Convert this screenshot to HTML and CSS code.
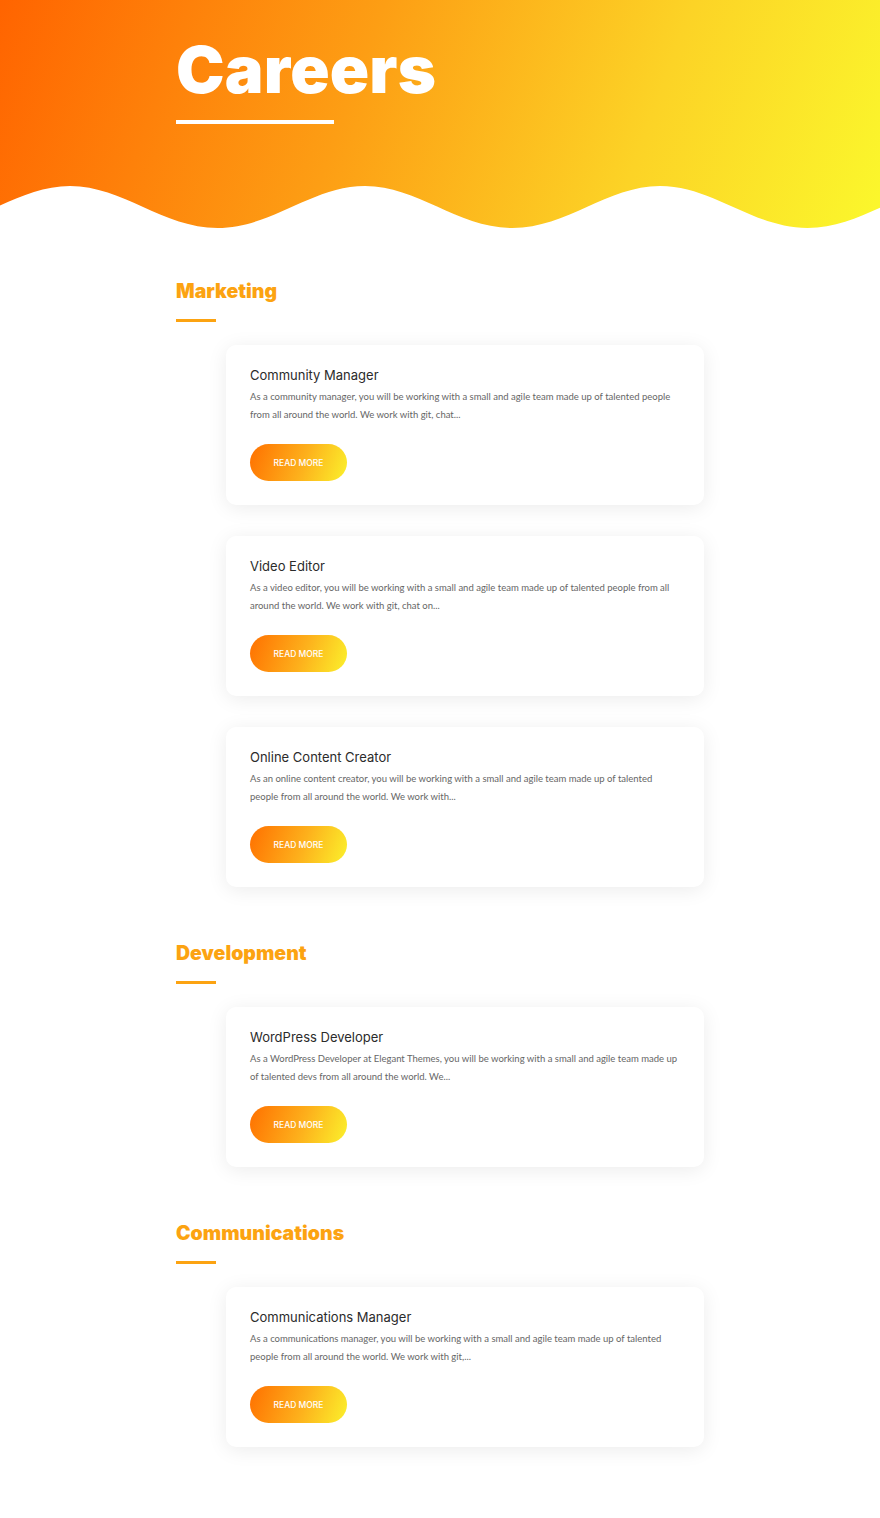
FILE: index.html
```html
<!DOCTYPE html>
<html lang="en">
<head>
  <meta charset="UTF-8" />
  <meta name="viewport" content="width=device-width, initial-scale=1" />
  <title>Careers</title>
  <link rel="stylesheet" href="styles.css">
</head>
<body>

<!-- Hero -->
<header class="hero">
  <div class="hero-inner">
    <h1>Careers</h1>
    <div class="hero-line"></div>
  </div>
  <svg class="hero-wave" viewBox="0 0 880 50" preserveAspectRatio="none" aria-hidden="true">
    <path fill="#fff" d="M-225 6 C-171 6 -131 48 -77.5 48 S17 6 70 6 S163 48 217.5 48 S312 6 365 6 S458 48 512.5 48 S607 6 660 6 S753 48 807.5 48 S902 6 955 6 V52 H-225 Z" />
  </svg>
</header>

<main class="jobs">

  <section class="dept">
    <h2>Marketing</h2>
    <div class="dept-line"></div>
    <div class="job-list">
      <div class="job">
        <h3>Community Manager</h3>
        <p>As a community manager, you will be working with a small and agile team made up of talented people from all around the world. We work with git, chat...</p>
        <a class="btn" href="#">READ MORE</a>
      </div>
      <div class="job">
        <h3>Video Editor</h3>
        <p>As a video editor, you will be working with a small and agile team made up of talented people from all around the world. We work with git, chat on...</p>
        <a class="btn" href="#">READ MORE</a>
      </div>
      <div class="job">
        <h3>Online Content Creator</h3>
        <p>As an online content creator, you will be working with a small and agile team made up of talented people from all around the world. We work with...</p>
        <a class="btn" href="#">READ MORE</a>
      </div>
    </div>
  </section>

  <section class="dept">
    <h2>Development</h2>
    <div class="dept-line"></div>
    <div class="job-list">
      <div class="job">
        <h3>WordPress Developer</h3>
        <p>As a WordPress Developer at Elegant Themes, you will be working with a small and agile team made up of talented devs from all around the world. We...</p>
        <a class="btn" href="#">READ MORE</a>
      </div>
    </div>
  </section>

  <section class="dept">
    <h2>Communications</h2>
    <div class="dept-line"></div>
    <div class="job-list">
      <div class="job">
        <h3>Communications Manager</h3>
        <p>As a communications manager, you will be working with a small and agile team made up of talented people from all around the world. We work with git,...</p>
        <a class="btn" href="#">READ MORE</a>
      </div>
    </div>
  </section>

</main>

</body>
</html>
```

FILE: styles.css
```css
body {
  margin: 0;
  background: #fff;
  font-family: Lato, "Open Sans", sans-serif;
  color: #666;
}
.hero {
  position: relative;
  height: 230px;
  background: linear-gradient(110deg, #ff6400 0%, #fd9e14 40%, #fcd326 72%, #fbf82c 100%);
  overflow: hidden;
}
.hero-inner {
  padding: 35px 0 0 176px;
}
.hero h1 {
  margin: 0;
  font-family: Inter, sans-serif;
  font-weight: 900;
  font-size: 65px;
  line-height: 70px;
  letter-spacing: 0.2px;
  color: #fff;
}
.hero-line {
  width: 158px;
  height: 4px;
  margin-top: 15px;
  background: #fff;
}
.hero-wave {
  position: absolute;
  left: 0;
  bottom: 0;
  width: 100%;
  height: 50px;
  display: block;
}
.jobs {
  padding: 0 0 70px 176px;
}
.dept {
  padding-top: 49px;
}
.dept + .dept {
  padding-top: 54px;
}
.dept h2 {
  margin: 0;
  font-family: Inter, sans-serif;
  font-weight: 900;
  font-size: 19.5px;
  line-height: 24px;
  color: #fca311;
}
.dept-line {
  width: 40px;
  height: 3px;
  margin-top: 16px;
  background: #fca311;
}
.job-list {
  margin: 23px 0 0 50px;
  display: flex;
  flex-direction: column;
  gap: 31px;
}
.job {
  width: 478px;
  box-sizing: border-box;
  padding: 21px 24px 24px;
  background: #fff;
  border-radius: 10px;
  box-shadow: 0 3px 20px rgba(0, 0, 0, 0.08);
}
.job h3 {
  margin: 0;
  font-family: Inter, sans-serif;
  font-weight: 400;
  font-size: 13px;
  line-height: 18px;
  color: #2b2b2b;
}
.job p {
  margin: 4px 0 0;
  font-size: 9.5px;
  line-height: 18px;
  color: #666;
}
.btn {
  display: flex;
  align-items: center;
  justify-content: center;
  width: 97px;
  height: 37px;
  margin-top: 20px;
  border-radius: 19px;
  background: linear-gradient(110deg, #ff7000 0%, #fdb11c 55%, #fbf12c 100%);
  font-family: Inter, sans-serif;
  font-size: 8.5px;
  font-weight: 500;
  color: #fff;
  text-decoration: none;
}
```
